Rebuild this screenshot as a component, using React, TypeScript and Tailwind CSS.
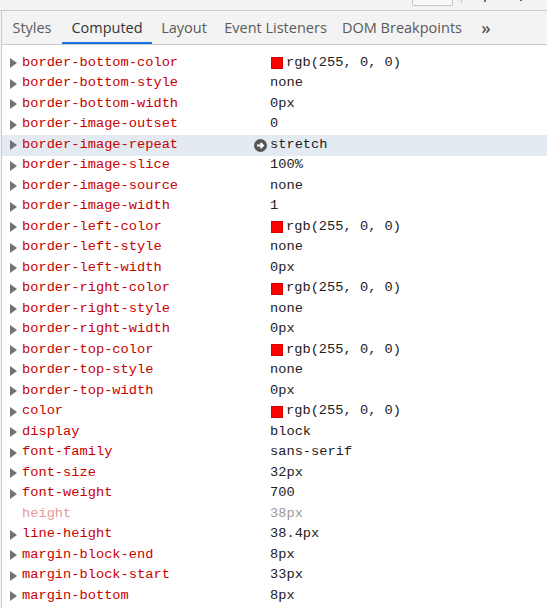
import React from "react"

type Row = { name: string; value: string; swatch?: boolean; faded?: boolean; hover?: boolean }

const rows: Row[] = [
    { name: "border-bottom-color", value: "rgb(255, 0, 0)", swatch: true },
    { name: "border-bottom-style", value: "none" },
    { name: "border-bottom-width", value: "0px" },
    { name: "border-image-outset", value: "0" },
    { name: "border-image-repeat", value: "stretch", hover: true },
    { name: "border-image-slice", value: "100%" },
    { name: "border-image-source", value: "none" },
    { name: "border-image-width", value: "1" },
    { name: "border-left-color", value: "rgb(255, 0, 0)", swatch: true },
    { name: "border-left-style", value: "none" },
    { name: "border-left-width", value: "0px" },
    { name: "border-right-color", value: "rgb(255, 0, 0)", swatch: true },
    { name: "border-right-style", value: "none" },
    { name: "border-right-width", value: "0px" },
    { name: "border-top-color", value: "rgb(255, 0, 0)", swatch: true },
    { name: "border-top-style", value: "none" },
    { name: "border-top-width", value: "0px" },
    { name: "color", value: "rgb(255, 0, 0)", swatch: true },
    { name: "display", value: "block" },
    { name: "font-family", value: "sans-serif" },
    { name: "font-size", value: "32px" },
    { name: "font-weight", value: "700" },
    { name: "height", value: "38px", faded: true },
    { name: "line-height", value: "38.4px" },
    { name: "margin-block-end", value: "8px" },
    { name: "margin-block-start", value: "33px" },
    { name: "margin-bottom", value: "8px" },
]

const tabs = [
    { label: "Styles", w: "w-[60px]" },
    { label: "Computed", w: "w-[90px]", active: true },
    { label: "Layout", w: "w-[64px]" },
    { label: "Event Listeners", w: "w-[119px]" },
    { label: "DOM Breakpoints", w: "w-[134px]" },
]

export default function App() {
    return (
        <div className="w-[547px] h-[608px] overflow-hidden bg-[#f3f3f3]" style={{ fontFamily: "'Segoe UI', 'Open Sans', sans-serif" }}>
            {/* Toolbar remnant */}
            <div className="h-[11px] border-b border-[#cbcbcb] relative">
                <div className="absolute left-[412px] top-0 w-[41px] h-[6px] border border-t-0 border-[#c4c4c4] rounded-b-[2px] bg-[#f7f7f7]"></div>
                <div className="absolute left-[461px] top-0 w-px h-[3px] bg-[#c4c4c4]"></div>
                <div className="absolute left-[484px] top-0 w-[2px] h-[2px] bg-[#6e6e6e]"></div>
                <div className="absolute left-[520px] top-0 w-[2px] h-[1px] bg-[#6e6e6e]"></div>
            </div>

            <div className="ml-px border-l border-[#cbcbcb] h-full">
                {/* Tabs */}
                <div className="flex h-[34px] border-b border-[#cbcbcb]">
                    {tabs.map((t) => (
                        <div
                            key={t.label}
                            className={`${t.w} relative flex items-center justify-center text-[14.5px] ${t.active ? "text-[#333]" : "text-[#5a5a5a]"}`}
                        >
                            {t.label}
                            {t.active && <div className="absolute left-0 right-0 bottom-0 h-[2px] bg-[#1a73e8]"></div>}
                        </div>
                    ))}
                    <div className="w-[34px] flex items-center justify-center text-[17px] font-semibold text-[#5a5a5a]">»</div>
                </div>

                {/* Computed list */}
                <div className="bg-white h-full pt-[8px]" style={{ fontFamily: "'Liberation Mono', monospace" }}>
                    {rows.map((r) => (
                        <div key={r.name} className={`flex items-center h-[20.5px] text-[13.7px] ${r.hover ? "bg-[#e4eaf2]" : ""}`}>
                            <div className="w-[20px] flex justify-center pl-[2px]">
                                {!r.faded && (
                                    <svg width="7" height="10" viewBox="0 0 7 10">
                                        <path d="M0 0 L7 5 L0 10 Z" fill="#727272" />
                                    </svg>
                                )}
                            </div>
                            <div className={`w-[229px] ${r.faded ? "text-[#e39a9a]" : "text-[#c80000]"}`}>{r.name}</div>
                            <div className="w-[19px] flex items-center justify-start">
                                {r.hover && (
                                    <svg width="13" height="13" viewBox="0 0 13 13" className="ml-[3px]">
                                        <circle cx="6.5" cy="6.5" r="6.5" fill="#555" />
                                        <path d="M3 6.5 H9 M6.5 3.8 L9.2 6.5 L6.5 9.2" stroke="#fff" strokeWidth="1.8" fill="none" />
                                    </svg>
                                )}
                            </div>
                            <div className={`flex items-center ${r.faded ? "text-[#9a9a9a]" : "text-[#222]"}`}>
                                {r.swatch && <span className="inline-block w-[12px] h-[12px] bg-[#ff0000] border border-[#d40000] mr-[3px] ml-px"></span>}
                                {r.value}
                            </div>
                        </div>
                    ))}
                </div>
            </div>
        </div>
    )
}
